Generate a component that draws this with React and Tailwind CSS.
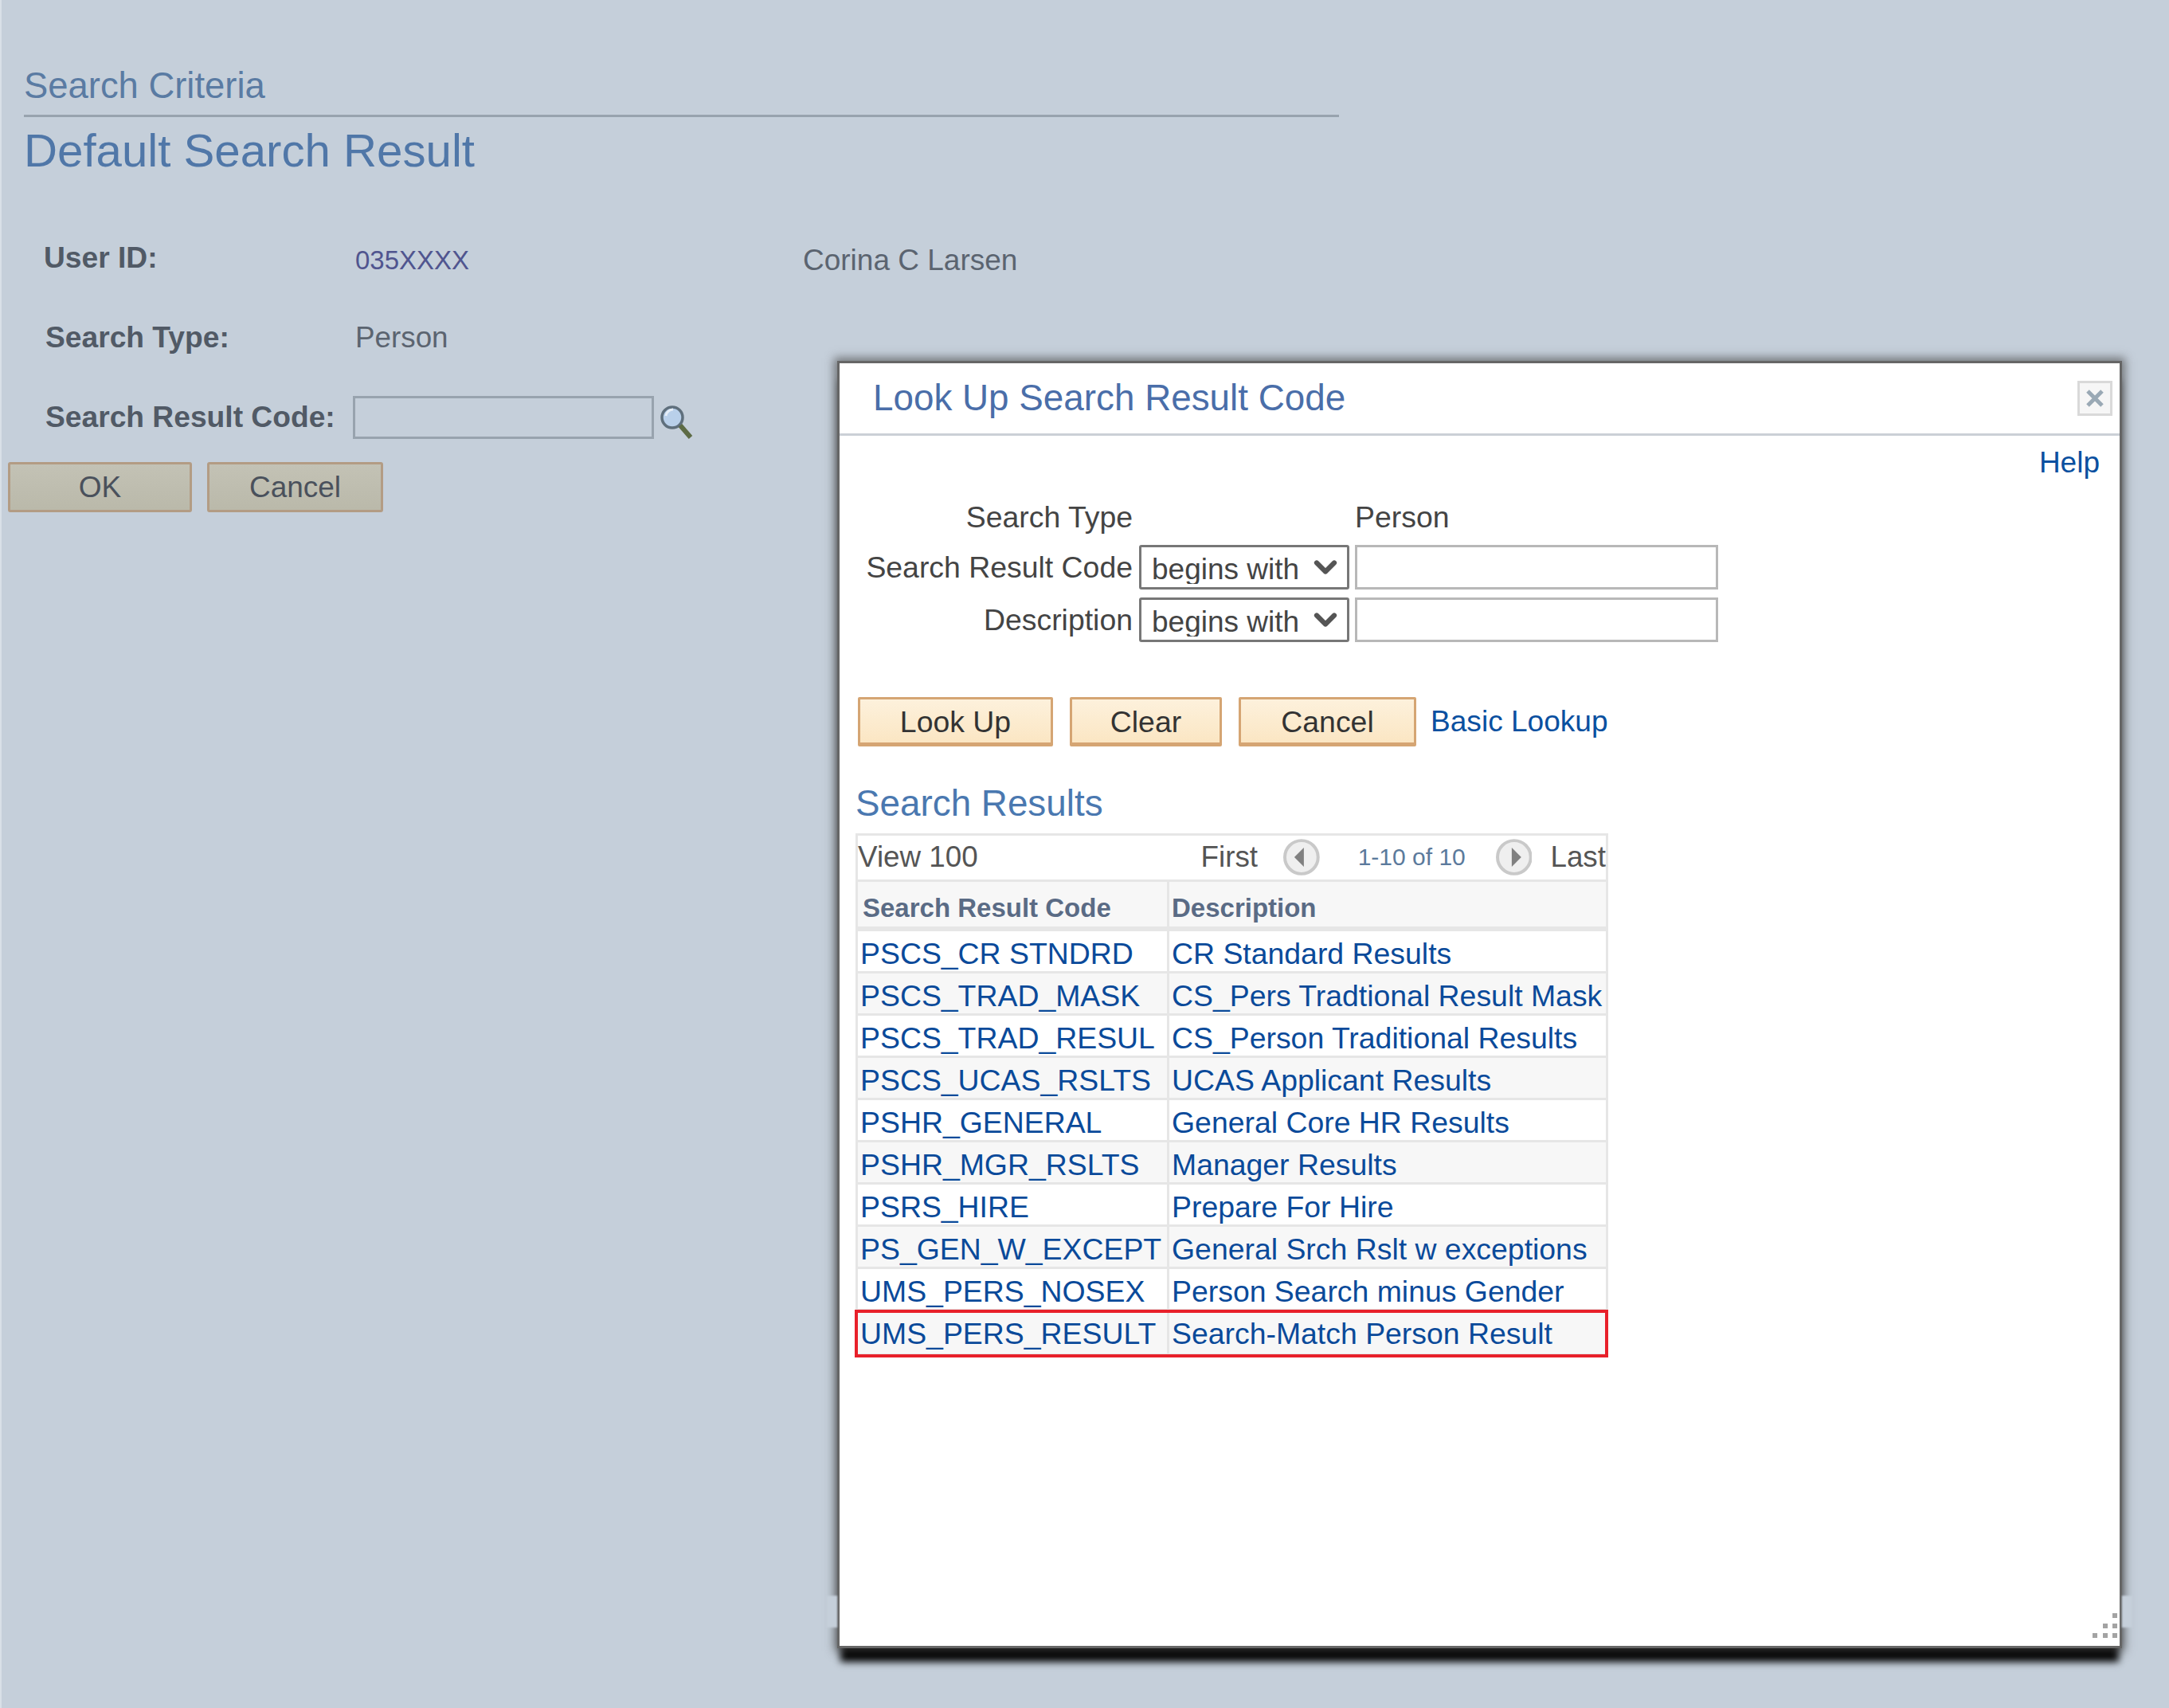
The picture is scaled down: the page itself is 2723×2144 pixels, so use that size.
import { ChevronDown } from 'lucide-react';

const rows = [
  ['PSCS_CR STNDRD', 'CR Standard Results'],
  ['PSCS_TRAD_MASK', 'CS_Pers Tradtional Result Mask'],
  ['PSCS_TRAD_RESUL', 'CS_Person Traditional Results'],
  ['PSCS_UCAS_RSLTS', 'UCAS Applicant Results'],
  ['PSHR_GENERAL', 'General Core HR Results'],
  ['PSHR_MGR_RSLTS', 'Manager Results'],
  ['PSRS_HIRE', 'Prepare For Hire'],
  ['PS_GEN_W_EXCEPT', 'General Srch Rslt w exceptions'],
  ['UMS_PERS_NOSEX', 'Person Search minus Gender'],
  ['UMS_PERS_RESULT', 'Search-Match Person Result'],
];

function SearchIcon() {
  return (
    <svg width="42" height="44" viewBox="0 0 42 44" className="ml-[7px] mt-[11px]">
      <circle cx="16" cy="16" r="13" fill="#b9d0ea" stroke="#5f6f7c" strokeWidth="3.5" />
      <path d="M8 14a9 9 0 0 1 9-8" stroke="#e6eef7" strokeWidth="3" fill="none" />
      <path d="M26 26l13 15" stroke="#5d6b45" strokeWidth="6" />
    </svg>
  );
}

function PageButton({ className, children }) {
  return (
    <button className={`h-[63px] rounded-[3px] border-[3px] border-[#b39c84] bg-gradient-to-b from-[#c3c2b5] to-[#bab9aa] text-[37px] text-[#4a515c] ${className}`}>
      {children}
    </button>
  );
}

function LookupButton({ className, children }) {
  return (
    <button className={`h-[62px] rounded-[2px] border-[3px] border-b-[5px] border-[#d5a573] bg-gradient-to-b from-[#fdf1dc] to-[#fbe6c3] text-[37.4px] text-[#333] ${className}`}>
      {children}
    </button>
  );
}

function BeginsWith() {
  return (
    <div className="relative h-[56px] w-[264px]">
      <select
        defaultValue="begins with"
        className="h-full w-full appearance-none rounded-[3px] border-[3px] border-[#777] bg-white pb-[4px] pl-[13px] text-[37px] text-[#444] outline-none"
      >
        <option>begins with</option>
      </select>
      <ChevronDown size={44} strokeWidth={3.4} color="#555" className="pointer-events-none absolute right-[8px] top-[6px]" />
    </div>
  );
}

function ArrowButton({ dir }) {
  return (
    <svg width="46" height="46" viewBox="0 0 46 46">
      <circle cx="23" cy="23" r="21" fill="#efefef" stroke="#c9c9c9" strokeWidth="4" />
      {dir === 'left' ? <path d="M14 23l12-12v24z" fill="#808080" /> : <path d="M32 23L20 11v24z" fill="#808080" />}
    </svg>
  );
}

export default function App() {
  return (
    <div
      className="relative h-[2144px] w-[2723px] overflow-hidden border-l-[2px] border-[#d9e0e7] bg-[#c5cfda]"
      style={{ fontFamily: '"Liberation Sans", Arial, sans-serif' }}
    >
      <div className="ml-[28px] w-[1651px] border-b-[3px] border-[#98a3ae] pb-[6px] pt-[78px] text-[45.4px] leading-[60px] text-[#5a7ba3]">
        Search Criteria
      </div>
      <h1 className="ml-[28px] mt-[9px] text-[58.2px] leading-[66px] text-[#5077a8]">Default Search Result</h1>

      <div className="mt-[52px] flex h-[100px] items-center text-[36px]">
        <span className="ml-[53px] w-[391px] text-[37.2px] font-bold text-[#515a66]">User ID:</span>
        <span className="w-[562px] pt-[6px] text-[33px] text-[#50558f]">035XXXX</span>
        <span className="pt-[6px] text-[37px] text-[#5b6470]">Corina C Larsen</span>
      </div>
      <div className="flex h-[100px] items-center text-[36px]">
        <span className="ml-[55px] w-[389px] text-[37.2px] font-bold text-[#515a66]">Search Type:</span>
        <span className="text-[36.8px] text-[#5b6470]">Person</span>
      </div>
      <div className="flex h-[100px] items-center">
        <span className="ml-[55px] w-[386px] text-[37.2px] font-bold text-[#515a66]">Search Result Code:</span>
        <input className="h-[54px] w-[378px] border-[3px] border-[#98a3ae] bg-transparent outline-none" />
        <SearchIcon />
      </div>
      <div className="ml-[8px] mt-[6px] flex gap-[19px]">
        <PageButton className="w-[231px]">OK</PageButton>
        <PageButton className="w-[221px]">Cancel</PageButton>
      </div>

      {/* lookup window */}
      <div className="absolute left-[1049px] top-[453px] h-[1616px] w-[1613px] border-[3px] border-[#666] bg-white shadow-[0_0_11px_4px_rgba(70,70,70,0.65),0_21px_9px_-4px_#000]">
        <div className="absolute -left-[16px] top-[1547px] h-[40px] w-[13px] bg-[#c5cfda] blur-[1px]" />
        <div className="absolute -right-[16px] top-[1547px] h-[40px] w-[13px] bg-[#c5cfda] blur-[1px]" />

        <div className="flex h-[91px] items-center justify-between border-b-[3px] border-[#cbd0d6] pl-[42px] pr-[9px]">
          <span className="text-[45.8px] text-[#4a6ea9]">Look Up Search Result Code</span>
          <button className="flex h-[44px] w-[44px] items-center justify-center border-[3px] border-[#d9d9d9] bg-[#f6f6f6]">
            <svg width="26" height="24" viewBox="0 0 26 24">
              <path d="M4 3l18 18M22 3L4 21" stroke="#9aa9b5" strokeWidth="5" />
            </svg>
          </button>
        </div>

        <div className="pr-[25px] pt-[13px] text-right text-[37px] leading-[42px] text-[#0a50a0]">Help</div>

        <div className="mt-[26px] grid grid-cols-[368px_264px_456px] items-center gap-x-[8px] text-[37.4px] text-[#444]">
          <div className="h-[42px] text-right leading-[42px]">Search Type</div>
          <div />
          <div className="h-[42px] -translate-x-[1px] leading-[42px]">Person</div>

          <div className="mt-[14px] text-right">Search Result Code</div>
          <div className="mt-[14px]"><BeginsWith /></div>
          <input className="mt-[14px] h-[56px] w-[456px] -translate-x-[1px] border-[3px] border-[#b8b8b8] outline-none" />

          <div className="mt-[10px] text-right">Description</div>
          <div className="mt-[10px]"><BeginsWith /></div>
          <input className="mt-[10px] h-[56px] w-[456px] -translate-x-[1px] border-[3px] border-[#b8b8b8] outline-none" />
        </div>

        <div className="ml-[23px] mt-[69px] flex items-center gap-[21px]">
          <LookupButton className="w-[245px]">Look Up</LookupButton>
          <LookupButton className="w-[191px]">Clear</LookupButton>
          <LookupButton className="w-[223px]">Cancel</LookupButton>
          <a className="-ml-[3px] text-[37.1px] text-[#0a50a0]">Basic Lookup</a>
        </div>

        <h2 className="ml-[20px] mt-[46px] text-[45.8px] leading-[52px] text-[#4a78b0]">Search Results</h2>

        <div className="ml-[20px] mt-[11px] w-[945px] border-[3px] border-[#e6e6e6]">
          <div className="flex h-[58px] items-center border-b-[3px] border-[#e6e6e6] pb-[2px] text-[36.8px] text-[#555]">
            <span className="w-[433px]">View 100</span>
            <span className="w-[104px]">First</span>
            <ArrowButton dir="left" />
            <span className="ml-[48px] w-[174px] text-[30px] text-[#5b7a9c]">1-10 of 10</span>
            <ArrowButton dir="right" />
            <span className="ml-[23px]">Last</span>
          </div>
          <div className="grid h-[62px] grid-cols-[391px_1fr] border-b-[6px] border-[#e6e6e6] bg-[#f7f7f7] pt-[8px] text-[33px] font-bold text-[#5a6b85]">
            <div className="-mt-[8px] flex items-center border-r-[3px] border-[#e6e6e6] pl-[6px] pt-[8px]">Search Result Code</div>
            <div className="flex items-center pl-[3px]">Description</div>
          </div>
          {rows.map(([code, desc], i) => (
            <div
              key={code}
              className={`relative grid h-[53px] grid-cols-[391px_1fr] whitespace-nowrap text-[37.4px] text-[#0a4a9a] ${i === 9 ? '' : 'border-b-[3px] border-[#e6e6e6]'} ${i % 2 === 1 ? 'bg-[#f7f7f7]' : 'bg-white'}`}
            >
              <div className="flex items-center border-r-[3px] border-[#e6e6e6] pl-[3px]">{code}</div>
              <div className="flex items-center pl-[3px]">{desc}</div>
              {i === 9 && <div className="absolute -bottom-[5px] -left-[4px] -right-[3px] -top-[2px] border-[4px] border-[#e8202a]" />}
            </div>
          ))}
        </div>

        <svg width="31" height="31" viewBox="0 0 31 31" className="absolute bottom-[10px] right-[3px]" fill="#a3a3a3">
          <rect x="25" y="0" width="6" height="6" />
          <rect x="13" y="13" width="6" height="6" />
          <rect x="25" y="13" width="6" height="6" />
          <rect x="0" y="25" width="6" height="6" />
          <rect x="13" y="25" width="6" height="6" />
          <rect x="25" y="25" width="6" height="6" />
        </svg>
      </div>
    </div>
  );
}
